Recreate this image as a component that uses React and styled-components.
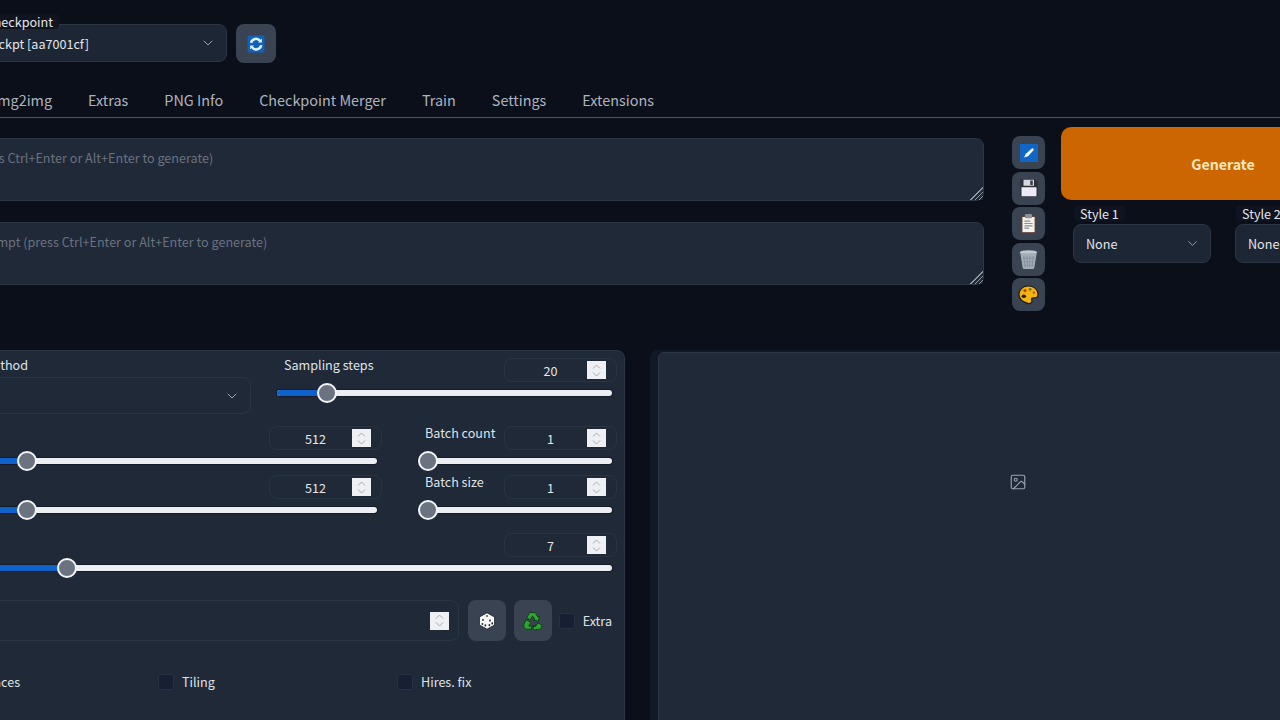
import styled, { createGlobalStyle } from "styled-components";
import { ChevronDown, Image as ImageIcon } from "lucide-react";

const GlobalStyle = createGlobalStyle`
    html, body {
        margin: 0;
        height: 720px;
        overflow: hidden;
        background: #0b0f19;
    }
    * {
        box-sizing: border-box;
    }
`;

const Page = styled.div`
    width: 1525px;
    height: 720px;
    margin-left: -140px;
    padding-left: 20px;
    padding-top: 24px;
    overflow: hidden;
    color: #e5e7eb;
    font-family: "Noto Sans CJK JP", "Noto Sans", sans-serif;
    font-size: 12.6px;
`;

const TopRow = styled.div`
    display: flex;
    align-items: flex-start;
    gap: 9px;
`;

const FloatLabel = styled.span`
    position: absolute;
    top: ${(p) => p.$top || -11}px;
    left: ${(p) => p.$left ?? 5}px;
    padding: 0 6px;
    line-height: 15px;
    font-size: 12.6px;
    color: #e5e7eb;
    white-space: nowrap;
    background: #0f1420;
    border-radius: 4px;
`;

const Select = styled.div`
    position: relative;
    display: flex;
    align-items: center;
    justify-content: space-between;
    width: ${(p) => p.$width}px;
    height: ${(p) => p.$height}px;
    padding: 0 10px 0 12px;
    background: #1c2635;
    border: 1px solid #2b3544;
    border-radius: 8px;
    color: #e5e7eb;
    font-size: 12.6px;
    svg {
        color: #9ca3af;
    }
`;

const MethodSelect = styled(Select)`
    background: transparent;
    border-color: #2b3644;
    margin-top: 5px;
`;

const ToolButton = styled.div`
    display: flex;
    align-items: center;
    justify-content: center;
    width: ${(p) => p.$size || 33}px;
    height: ${(p) => p.$height || p.$size || 33}px;
    background: #3a4351;
    border-radius: 8px;
`;

const Tabs = styled.nav`
    display: flex;
    gap: 36px;
    height: 39px;
    margin-top: 16px;
    padding-left: 26.5px;
    align-items: center;
    padding-top: 2px;
    border-bottom: 1px solid #4b5563;
    font-size: 14.4px;
    color: #aeb4bf;
`;

const MainRow = styled.div`
    display: flex;
    align-items: flex-start;
    padding: 9px 0 0 32px;
`;

const Prompts = styled.div`
    flex: 1;
    display: flex;
    flex-direction: column;
    gap: 21px;
    margin-top: 11px;
`;

const PromptBox = styled.textarea`
    display: block;
    width: 100%;
    height: ${(p) => p.$height}px;
    padding: 9px 12px 9px 9px;
    background: #1f2937;
    border: 1px solid #2b3646;
    border-radius: 8px;
    outline: none;
    resize: vertical;
    font-family: inherit;
    font-size: 12.6px;
    color: #e5e7eb;
    &::placeholder {
        color: #6b7280;
    }
    &::-webkit-resizer {
        background:
            linear-gradient(135deg, #1f2937 50%, transparent 50%),
            repeating-linear-gradient(135deg, #8f97a3 0 1px, #1f2937 1px 3px);
    }
`;

const Tools = styled.div`
    display: flex;
    flex-direction: column;
    gap: 2.5px;
    margin: 9px 16px 0 28px;
`;

const GenerateColumn = styled.div`
    width: 324px;
`;

const GenerateButton = styled.div`
    display: flex;
    align-items: center;
    justify-content: center;
    height: 73px;
    background: #cb6601;
    border-radius: 10px;
    color: #fde6bd;
    font-size: 14.2px;
    font-weight: 700;
`;

const StyleRow = styled.div`
    display: flex;
    gap: 24px;
    margin-top: 24px;
    padding-left: 12px;
`;

const LowerRow = styled.div`
    display: flex;
    gap: 25px;
    margin-top: 39px;
    padding-left: 32px;
`;

const ControlPanel = styled.section`
    width: 713px;
    height: 400px;
    flex-shrink: 0;
    padding: 7px 12px 0;
    background: #1f2937;
    border: 1px solid #2b3646;
    border-radius: 8px 8px 0 0;
`;

const SamplingRow = styled.div`
    display: flex;
    gap: 26px;
`;

const MethodColumn = styled.div`
    width: 326px;
    flex-shrink: 0;
`;

const FieldLabel = styled.label`
    display: block;
    padding-left: 7px;
    line-height: 14px;
    font-size: 12.6px;
    color: #dfe3e8;
    white-space: nowrap;
`;

const MethodLabel = styled(FieldLabel)`
    padding-left: 0;
    margin-left: -2px;
`;

const SliderGrid = styled.div`
    display: grid;
    grid-template-columns: 1fr 194px;
    column-gap: 41px;
    row-gap: 3px;
    margin-top: 12px;
`;

const ScaleRow = styled.div`
    margin-top: 12px;
`;

const SliderBlock = styled.div`
    flex: 1;
    min-width: 0;
`;

const SliderHead = styled.div`
    display: flex;
    justify-content: space-between;
    align-items: flex-start;
    height: 24px;
`;

const NumberBox = styled.div`
    display: flex;
    align-items: center;
    justify-content: flex-end;
    width: 113px;
    height: 24px;
    margin-right: -5px;
    padding-right: 10px;
    border: 1px solid #293443;
    border-radius: 8px;
    font-size: 12.6px;
    color: #e5e7eb;
`;

const NumberValue = styled.span`
    flex: 1;
    padding-left: 9px;
    text-align: center;
`;

const Spinner = styled.span`
    display: flex;
    align-items: center;
    justify-content: center;
    width: 19px;
    height: 18px;
    background: #eef0f4;
`;

const Track = styled.div`
    position: relative;
    height: 22px;
    &::before {
        content: "";
        position: absolute;
        left: 0;
        right: 0;
        top: 8px;
        height: 6px;
        border-radius: 3px;
        background: #eceef2;
        box-shadow: 0 0 0 1px #151c29;
    }
`;

const TrackFill = styled.div`
    position: absolute;
    left: 0;
    top: 8px;
    height: 6px;
    border-radius: 3px;
    background: #0f62c9;
`;

const Thumb = styled.div`
    position: absolute;
    top: 1px;
    width: 20px;
    height: 20px;
    margin-left: -10px;
    border-radius: 50%;
    background: #6b7280;
    border: 2px solid #f3f4f6;
`;

const SeedRow = styled.div`
    display: flex;
    align-items: center;
    margin-top: 21px;
`;

const SeedInput = styled.div`
    display: flex;
    align-items: center;
    justify-content: flex-end;
    width: 535px;
    height: 41px;
    padding-right: 9px;
    border: 1px solid #2b3644;
    border-radius: 8px;
    margin-right: 9px;
`;

const SeedButtons = styled.div`
    display: flex;
    gap: 8px;
    margin-right: 7px;
`;

const Check = styled.span`
    display: inline-block;
    width: 16px;
    height: 16px;
    background: #172033;
    border: 1px solid #263143;
    border-radius: 3px;
    flex-shrink: 0;
`;

const CheckField = styled.div`
    display: flex;
    align-items: center;
    gap: 8px;
    width: ${(p) => (p.$width ? p.$width + "px" : "auto")};
    color: #dfe3e8;
    font-size: 12.6px;
`;

const OptionsRow = styled.div`
    display: flex;
    margin-top: 31px;
    margin-left: -6px;
`;

const OutputBlock = styled.section`
    flex: 1;
    height: 400px;
    padding: 2px 8px 0;
    background: #121926;
    border-radius: 8px 8px 0 0;
`;

const ImagePanel = styled.div`
    display: flex;
    justify-content: center;
    height: 100%;
    padding-top: 120px;
    background: #1f2937;
    border: 1px solid #2b3646;
    border-radius: 6px 6px 0 0;
    color: #9ca3af;
`;

const SpinIcon = () => (
    <svg width="13" height="15" viewBox="0 0 13 15" fill="none" stroke="#a5acb7" strokeWidth="1">
        <path d="M3 5.5 6.5 2 10 5.5" />
        <path d="M3 9.5 6.5 13 10 9.5" />
    </svg>
);

const RefreshIcon = () => (
    <svg width="18" height="18" viewBox="0 0 16 16">
        <rect x="0.5" y="0.5" width="15" height="15" rx="1" fill="#0f62b8" />
        <path d="M3.6 7A4.5 4.5 0 0 1 11.6 5.2" fill="none" stroke="#dff1ff" strokeWidth="2.2" />
        <path d="M12.6 9A4.5 4.5 0 0 1 4.4 10.8" fill="none" stroke="#dff1ff" strokeWidth="2.2" />
        <path d="M9.8 6.6h3.4V3.2z M6.2 9.4H2.8v3.4z" fill="#dff1ff" />
    </svg>
);

const CheckIcon = () => (
    <svg width="18" height="18" viewBox="0 0 16 16">
        <rect width="16" height="16" fill="#0f66c4" />
        <path d="M3.6 12 5 8.8l6-5.2 1.4 1.4-5.2 5.8z" fill="#f4f8fc" />
    </svg>
);

const SaveIcon = () => (
    <svg width="20" height="20" viewBox="0 0 16 16">
        <path d="M1 1h12l2 2v12H1z" fill="#2d303a" />
        <rect x="2" y="7.4" width="12" height="7.2" fill="#ebeaf6" />
        <rect x="3.6" y="1.4" width="8.4" height="4.8" fill="#d4d6e0" />
        <rect x="9" y="2" width="2" height="3.6" fill="#3a3d47" />
    </svg>
);

const ClipboardIcon = () => (
    <svg width="19" height="21" viewBox="0 0 16 18">
        <rect x="1.5" y="2" width="13" height="15.5" rx="1" fill="#5b4034" />
        <rect x="2.8" y="3.4" width="10.4" height="13" fill="#f4f2ec" />
        <rect x="5" y="0.8" width="6" height="3.6" rx="0.8" fill="#8b9099" />
        <path d="M4.5 7h5M4.5 9h7M4.5 11h7M4.5 13h4" stroke="#8c8f94" strokeWidth="1" />
    </svg>
);

const TrashIcon = () => (
    <svg width="19" height="21" viewBox="0 0 16 18">
        <ellipse cx="8" cy="3" rx="7.4" ry="2" fill="#c0c9d2" />
        <path d="M1 3.6h14L13 16a1.4 1.4 0 0 1-1.4 1.2H4.4A1.4 1.4 0 0 1 3 16z" fill="#a3adb8" />
        <path d="M4 6l1 10M6.7 6l.4 10M9.3 6l-.4 10M12 6l-1 10M3 8h10M3.4 11h9.2M3.8 14h8.4" stroke="#7f8a96" strokeWidth="0.6" />
    </svg>
);

const PaletteIcon = () => (
    <svg width="21" height="21" viewBox="0 0 18 18">
        <path d="M9 1.6c4.6 0 8.2 3.2 8.2 7.2 0 2.4-1.6 3.2-3.2 3-1.8-.2-2.8.6-2.2 2.2.6 1.6-.6 3-2.8 2.8C4.4 15.6.8 12.6.8 8.8.8 4.8 4.4 1.6 9 1.6z" fill="#f4b40f" stroke="#1b1b1b" strokeWidth="1" />
        <circle cx="6" cy="5.6" r="1.4" fill="#c9421d" />
        <circle cx="10.4" cy="4.6" r="1.2" fill="#7d6a2c" />
        <circle cx="13.6" cy="7.4" r="1" fill="#c9421d" />
        <ellipse cx="5" cy="10.6" rx="1.9" ry="1.5" fill="#23211c" />
    </svg>
);

const DiceIcon = () => (
    <svg width="18" height="18" viewBox="0 0 18 18">
        <path d="M9 .8 16.6 5v8L9 17.2 1.4 13V5z" fill="#f5f6f7" stroke="#16181d" strokeWidth="0.8" />
        <g fill="#23262c">
            <ellipse cx="9" cy="4" rx="1.1" ry="0.8" />
            <ellipse cx="5" cy="8" rx="0.9" ry="1.1" />
            <ellipse cx="4.4" cy="12" rx="0.9" ry="1.1" />
            <ellipse cx="7.4" cy="13.4" rx="0.9" ry="1.1" />
            <ellipse cx="12" cy="8.6" rx="0.9" ry="1.1" />
            <ellipse cx="14.2" cy="11.4" rx="0.9" ry="1.1" />
            <ellipse cx="11.4" cy="13.2" rx="0.9" ry="1.1" />
        </g>
    </svg>
);

const RecycleIcon = () => (
    <svg width="20" height="20" viewBox="0 0 18 18">
        <g fill="#2ba532" stroke="#0f3a12" strokeWidth="0.8" strokeLinejoin="round">
            <path d="M6 1.4h5l2.4 4 1.4-.6-1 4.4-4.4-1 1.2-.8L8.6 4.6 6.6 8 3.4 6z" />
            <path d="M.8 12l2-4.2 4 2.2-.2 1-1.4 2.6h2.6v2.8H3.2C1.4 16.4.2 14 .8 12z" />
            <path d="M8.6 13.6h3l1.6-2.8 4 1.8-1 2.6c-.4 1-1.2 1.4-2.2 1.4h-2.4v1.4l-3-2.6 3-2.8z" />
        </g>
    </svg>
);

function Slider({ label, value, percent }) {
    return (
        <SliderBlock>
            <SliderHead>
                <FieldLabel>{label}</FieldLabel>
                <NumberBox>
                    <NumberValue>{value}</NumberValue>
                    <Spinner><SpinIcon /></Spinner>
                </NumberBox>
            </SliderHead>
            <Track>
                <TrackFill style={{ width: percent + "%" }} />
                <Thumb style={{ left: percent + "%" }} />
            </Track>
        </SliderBlock>
    );
}

export default function App() {
    return (
        <Page>
            <GlobalStyle />
            <TopRow>
                <Select $width={347} $height={38}>
                    <FloatLabel>Stable Diffusion checkpoint</FloatLabel>
                    <span>v1-5-pruned-ema.ckpt [aa7001cf]</span>
                    <ChevronDown size={16} strokeWidth={1.5} />
                </Select>
                <ToolButton $size={40} $height={39}><RefreshIcon /></ToolButton>
            </TopRow>
            <Tabs>
                <span>txt2img</span>
                <span>img2img</span>
                <span>Extras</span>
                <span>PNG Info</span>
                <span>Checkpoint Merger</span>
                <span>Train</span>
                <span>Settings</span>
                <span>Extensions</span>
            </Tabs>
            <MainRow>
                <Prompts>
                    <PromptBox $height={63} placeholder="Prompt (press Ctrl+Enter or Alt+Enter to generate)" />
                    <PromptBox $height={63} placeholder="Negative prompt (press Ctrl+Enter or Alt+Enter to generate)" />
                </Prompts>
                <Tools>
                    <ToolButton><CheckIcon /></ToolButton>
                    <ToolButton><SaveIcon /></ToolButton>
                    <ToolButton><ClipboardIcon /></ToolButton>
                    <ToolButton><TrashIcon /></ToolButton>
                    <ToolButton><PaletteIcon /></ToolButton>
                </Tools>
                <GenerateColumn>
                    <GenerateButton>Generate</GenerateButton>
                    <StyleRow>
                        <Select $width={138} $height={39}>
                            <FloatLabel $left={0} $top={-19}>Style 1</FloatLabel>
                            None
                            <ChevronDown size={15} strokeWidth={1.5} />
                        </Select>
                        <Select $width={138} $height={39}>
                            <FloatLabel $left={0} $top={-19}>Style 2</FloatLabel>
                            None
                            <ChevronDown size={15} strokeWidth={1.5} />
                        </Select>
                    </StyleRow>
                </GenerateColumn>
            </MainRow>
            <LowerRow>
                <ControlPanel>
                    <SamplingRow>
                        <MethodColumn>
                            <MethodLabel>Sampling method</MethodLabel>
                            <MethodSelect $width={326} $height={37}>
                                Euler a
                                <ChevronDown size={16} strokeWidth={1.5} />
                            </MethodSelect>
                        </MethodColumn>
                        <Slider label="Sampling steps" value="20" percent={15} />
                    </SamplingRow>
                    <SliderGrid>
                        <Slider label="Width" value="512" percent={22.6} />
                        <Slider label="Batch count" value="1" percent={5} />
                        <Slider label="Height" value="512" percent={22.6} />
                        <Slider label="Batch size" value="1" percent={5} />
                    </SliderGrid>
                    <ScaleRow>
                        <Slider label="CFG Scale" value="7" percent={20.7} />
                    </ScaleRow>
                    <SeedRow>
                        <SeedInput><Spinner><SpinIcon /></Spinner></SeedInput>
                        <SeedButtons>
                            <ToolButton $size={38} $height={41}><DiceIcon /></ToolButton>
                            <ToolButton $size={38} $height={41}><RecycleIcon /></ToolButton>
                        </SeedButtons>
                        <CheckField><Check />Extra</CheckField>
                    </SeedRow>
                    <OptionsRow>
                        <CheckField $width={239}><Check />Restore faces</CheckField>
                        <CheckField $width={239}><Check />Tiling</CheckField>
                        <CheckField><Check />Hires. fix</CheckField>
                    </OptionsRow>
                </ControlPanel>
                <OutputBlock>
                    <ImagePanel><ImageIcon size={18} strokeWidth={1.5} /></ImagePanel>
                </OutputBlock>
            </LowerRow>
        </Page>
    );
}
